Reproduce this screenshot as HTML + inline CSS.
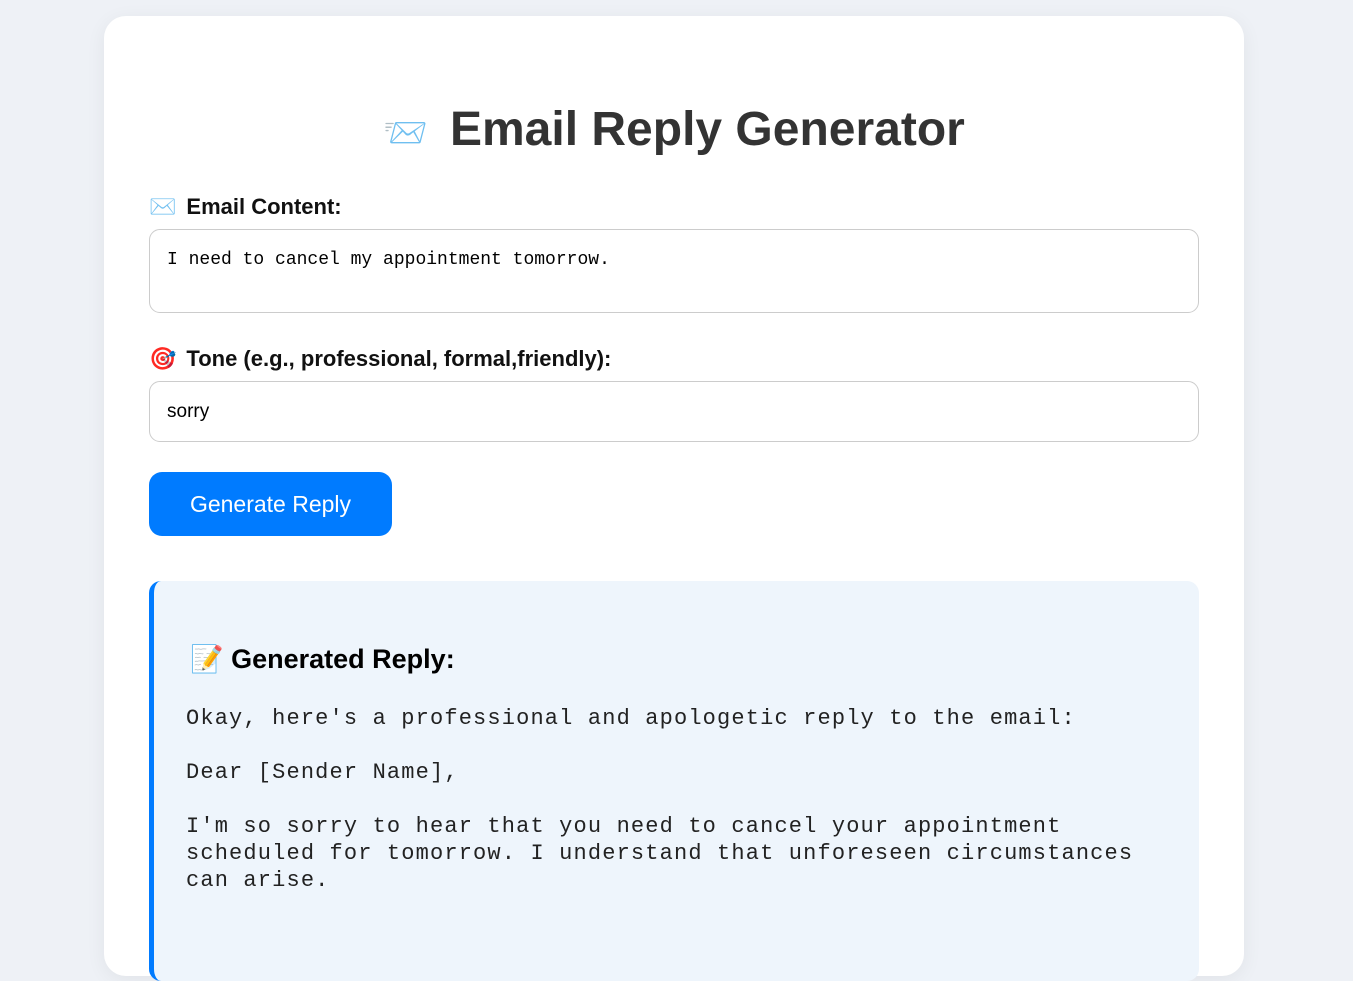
<!DOCTYPE html>
<html><head><meta charset="utf-8"><style>
html,body{margin:0;width:1353px;height:906px;overflow:hidden}
body{background:#eef1f6;font-family:"Liberation Sans",sans-serif}
.card{position:absolute;left:104px;top:16px;width:1140px;height:960px;background:#fff;border-radius:22px;box-shadow:0 4px 20px rgba(0,0,0,.06)}
h1{position:absolute;left:0;right:0;top:86px;margin:0;text-align:center;font-size:48px;color:#333;font-weight:bold}
.lbl{position:absolute;left:45px;font-size:22px;font-weight:bold;color:#111}
.lbl span{margin-right:10px}
.box{position:absolute;left:45px;width:1048px;border:1px solid #ccc;border-radius:11px;background:#fff}
.btn{position:absolute;left:45px;top:456px;width:243px;height:64px;background:#007bff;border-radius:13px;color:#fff;font-size:23px;line-height:64px;text-align:center}
.res{position:absolute;left:45px;top:565px;width:1045px;height:400px;background:#eef5fc;border-left:5px solid #007bff;border-radius:12px}
pre{position:absolute;left:32px;top:124px;margin:0;font-family:"Liberation Mono",monospace;font-size:22px;letter-spacing:1.15px;line-height:27px;color:#222}
</style></head><body>
<div class="card">
<h1><span style="font-size:36px;margin-right:22px">📨</span>Email Reply Generator</h1>
<div class="lbl" style="top:178px"><span>✉️</span>Email Content:</div>
<div class="box" style="top:213px;height:82px"><div style="font-family:'Liberation Mono',monospace;font-size:18px;padding:20px 17px">I need to cancel my appointment tomorrow.</div></div>
<div class="lbl" style="top:330px"><span>🎯</span>Tone (e.g., professional, formal,friendly):</div>
<div class="box" style="top:365px;height:59px"><div style="font-size:19px;padding:19px 17px 0">sorry</div></div>
<div class="btn">Generate Reply</div>
<div class="res">
<div style="position:absolute;left:36px;top:62px;font-size:27px;font-weight:bold;color:#000">📝 Generated Reply:</div>
<pre>Okay, here's a professional and apologetic reply to the email:

Dear [Sender Name],

I'm so sorry to hear that you need to cancel your appointment
scheduled for tomorrow. I understand that unforeseen circumstances
can arise.</pre>
</div>
</div>
</body></html>
